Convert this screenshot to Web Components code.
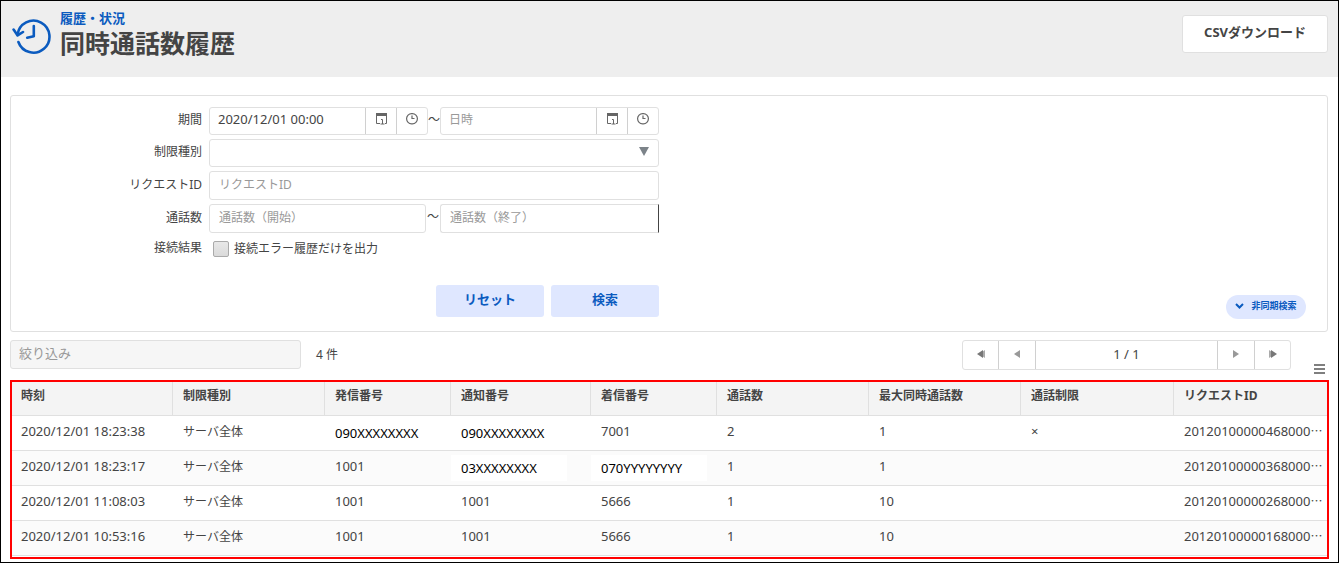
<!DOCTYPE html>
<html lang="ja">
<head>
<meta charset="utf-8">
<meta name="viewport" content="width=device-width, initial-scale=1">
<title>同時通話数履歴</title>
<style>
  :root {
    --text: #444;
    --muted: #999;
    --line: #e0e0e0;
    --line-dark: #d0d0d0;
    --blue: #0b5bbf;
    --blue-bg: #dfe7ff;
    --radius: 3px;
  }

  * {
    box-sizing: border-box;
  }

  body {
    margin: 0;
    min-height: 100vh;
    border: 1px solid #000;
    background: #fff;
    color: var(--text);
    font: 12px/18px "Noto Sans", "Noto Sans CJK JP", sans-serif;
  }

  main {
    padding: 18px 10px 3px 9px;
  }
</style>
</head>
<body>
<page-header category="履歴・状況" heading="同時通話数履歴">
  <csv-button>CSVダウンロード</csv-button>
</page-header>
<main>
  <search-panel></search-panel>
  <list-toolbar count="4" page="1" pages="1"></list-toolbar>
  <history-table></history-table>
</main>

<script>
const baseStyle = `
  *, :host { box-sizing: border-box; }
  button, input, select { font: inherit; color: inherit; margin: 0; }
  button { cursor: pointer; }
  svg { display: block; }
`;

class PageHeader extends HTMLElement {
  constructor() {
    super();
    this.attachShadow({ mode: 'open' });
  }

  connectedCallback() {
    this.shadowRoot.innerHTML = `
      <style>
        ${baseStyle}
        :host {
          display: block;
          background: #eee;
        }

        header {
          display: flex;
          align-items: flex-start;
          gap: 8px;
          min-height: 76px;
          padding: 8px 10px 0 11px;
        }

        .icon {
          margin-top: 8px;
        }

        .titles {
          flex: 1;
        }

        p {
          margin: 0;
          font-size: 13px;
          line-height: 18px;
          font-weight: bold;
          color: var(--blue);
        }

        h1 {
          margin: 0;
          font-size: 25px;
          line-height: 32px;
          font-weight: bold;
        }

        slot {
          display: block;
          padding-top: 6px;
        }
      </style>
      <header>
        <svg class="icon" width="40" height="38" viewBox="0 0 40 38" fill="none" stroke="#0b5bbf" stroke-width="2.6" stroke-linecap="round" stroke-linejoin="round" aria-hidden="true">
          <path d="M5.6 17.6A16 16 0 1 1 6.4 25"/>
          <path d="M1.6 12.6L5.6 18.4L11 15"/>
          <path d="M21.8 9V19.2L15.2 20.8"/>
        </svg>
        <div class="titles">
          <p>${this.getAttribute('category')}</p>
          <h1>${this.getAttribute('heading')}</h1>
        </div>
        <slot></slot>
      </header>
    `;
  }
}

class CsvButton extends HTMLElement {
  constructor() {
    super();
    this.attachShadow({ mode: 'open' });
    this.shadowRoot.innerHTML = `
      <style>
        ${baseStyle}
        :host {
          display: block;
        }

        button {
          display: block;
          height: 38px;
          padding: 0 21px 4px;
          border: 1px solid var(--line);
          border-radius: var(--radius);
          background: #fff;
          font-size: 13px;
          font-weight: bold;
        }
      </style>
      <button type="button"><slot></slot></button>
    `;
  }
}

// text box with calendar and clock buttons
class DateField extends HTMLElement {
  static formAssociated = true;

  constructor() {
    super();
    this.attachShadow({ mode: 'open', delegatesFocus: true });
  }

  connectedCallback() {
    this.shadowRoot.innerHTML = `
      <style>
        ${baseStyle}
        :host {
          display: flex;
          min-width: 0;
          height: 28px;
          border: 1px solid var(--line);
          border-radius: var(--radius);
          background: #fff;
        }

        input {
          flex: 1;
          min-width: 0;
          padding: 0 8px 4px;
          border: 0;
          background: none;
          font-size: 13px;
        }

        input::placeholder {
          color: var(--muted);
          font-size: 12px;
        }

        button {
          display: flex;
          justify-content: center;
          width: 31px;
          padding: 5px 0 0;
          border: 0;
          border-left: 1px solid var(--line-dark);
          background: none;
        }
      </style>
      <input type="text" aria-label="${this.getAttribute('label')}" value="${this.getAttribute('value') || ''}" placeholder="${this.getAttribute('placeholder') || ''}">
      <button type="button" aria-label="カレンダー">
        <svg width="11" height="12" viewBox="0 0 11 12" fill="none" stroke="#666">
          <path d="M.5 1V10.5H4M10.5 1V10.5H9"/>
          <path d="M0 1.5H11" stroke-width="3"/>
          <path d="M5 6.5H6.5V11M4.5 11H8.5"/>
        </svg>
      </button>
      <button type="button" aria-label="時計">
        <svg width="12" height="12" viewBox="0 0 12 12" fill="none" stroke="#666" stroke-width="1.2">
          <rect x=".6" y=".6" width="10.8" height="10.2" rx="5"/>
          <path d="M6 2.5V5.5H8.5"/>
        </svg>
      </button>
    `;
  }
}

class SearchPanel extends HTMLElement {
  constructor() {
    super();
    this.attachShadow({ mode: 'open' });
    this.shadowRoot.innerHTML = `
      <style>
        ${baseStyle}
        :host {
          display: block;
          border: 1px solid var(--line);
          border-radius: var(--radius);
        }

        form {
          padding: 11px 21px 12px 0;
        }

        .fields {
          display: grid;
          grid-template-columns: 191px 450px;
          column-gap: 7px;
          row-gap: 4px;
        }

        .name {
          align-self: center;
          padding-bottom: 2px;
          text-align: right;
        }

        .range {
          display: grid;
          grid-template-columns: 219px 12px 219px;
          align-items: center;
        }

        .range.calls {
          grid-template-columns: 217px 14px 219px;
        }

        .range span {
          padding-bottom: 3px;
          text-align: center;
        }

        input[type="text"], select {
          width: 100%;
          height: 29px;
          padding: 0 9px 3px;
          border: 1px solid var(--line);
          border-radius: var(--radius);
          background: #fff;
        }

        input::placeholder {
          color: var(--muted);
        }

        #calls-to {
          border-right-color: #444;
          border-top-right-radius: 0;
          border-bottom-right-radius: 0;
        }

        .select {
          display: grid;
          align-items: center;
        }

        .select > * {
          grid-area: 1 / 1;
        }

        .select svg {
          justify-self: end;
          margin: 0 10px 3px 0;
          pointer-events: none;
        }

        select {
          appearance: none;
          height: 28px;
        }

        .check {
          display: flex;
          align-items: center;
          gap: 5px;
          height: 24px;
          padding-left: 4px;
        }

        input[type="checkbox"] {
          appearance: none;
          width: 16px;
          height: 16px;
          border: 1px solid #aaa;
          border-radius: 2px;
          background: linear-gradient(#e8e8e8, #dadada);
        }

        .actions {
          display: flex;
          gap: 7px;
          height: 34px;
          margin-top: 24px;
          padding-left: 425px;
        }

        .actions button {
          width: 108px;
          height: 32px;
          padding: 0 0 5px;
          border: 0;
          border-radius: var(--radius);
          background: var(--blue-bg);
          color: var(--blue);
          font-size: 13px;
          font-weight: bold;
        }

        .actions .pill {
          display: flex;
          align-items: center;
          justify-content: center;
          align-self: flex-end;
          gap: 7px;
          width: 80px;
          height: 24px;
          margin-left: auto;
          padding: 0 0 2px;
          border-radius: 12px;
          font-size: 9px;
        }
      </style>
      <form>
        <div class="fields">
          <label class="name" for="from">期間</label>
          <div class="range">
            <date-field id="from" label="期間（開始）" value="2020/12/01 00:00"></date-field>
            <span>～</span>
            <date-field label="期間（終了）" placeholder="日時"></date-field>
          </div>

          <label class="name" for="kind">制限種別</label>
          <div class="select">
            <select id="kind"><option></option></select>
            <svg width="10" height="9" viewBox="0 0 10 9" aria-hidden="true"><path d="M0 0H10L5 9Z" fill="#7c8389"/></svg>
          </div>

          <label class="name" for="request">リクエストID</label>
          <input type="text" id="request" placeholder="リクエストID">

          <label class="name" for="calls-from">通話数</label>
          <div class="range calls">
            <input type="text" id="calls-from" placeholder="通話数（開始）">
            <span>～</span>
            <input type="text" id="calls-to" aria-label="通話数（終了）" placeholder="通話数（終了）">
          </div>

          <span class="name">接続結果</span>
          <div class="check">
            <input type="checkbox" id="errors">
            <label for="errors">接続エラー履歴だけを出力</label>
          </div>
        </div>
        <div class="actions">
          <button type="reset">リセット</button>
          <button type="button">検索</button>
          <button type="button" class="pill">
            <svg width="9" height="6" viewBox="0 0 9 6" fill="none" stroke="#0b5bbf" stroke-width="2" aria-hidden="true"><path d="M1 1L4.5 4.5L8 1"/></svg>
            非同期検索
          </button>
        </div>
      </form>
    `;
  }
}

class ListToolbar extends HTMLElement {
  constructor() {
    super();
    this.attachShadow({ mode: 'open' });
  }

  connectedCallback() {
    this.shadowRoot.innerHTML = `
      <style>
        ${baseStyle}
        :host {
          display: flex;
          align-items: flex-start;
          height: 48px;
          padding: 8px 3px 0 0;
        }

        input {
          width: 291px;
          height: 29px;
          padding: 0 8px 3px;
          border: 1px solid var(--line);
          border-radius: var(--radius);
          background: #f6f6f6;
          font-size: 13px;
        }

        input::placeholder {
          color: var(--muted);
        }

        .count {
          flex: 1;
          padding: 6px 0 0 15px;
        }

        .pager {
          display: grid;
          grid-template-columns: 35px 37px 182px 37px 36px;
          height: 30px;
          border: 1px solid var(--line);
          border-radius: var(--radius);
        }

        .pager > * {
          display: flex;
          justify-content: center;
          align-items: center;
          padding: 0 0 2px;
          border: 0;
          background: none;
          font-size: 13px;
        }

        .pager > * + * {
          border-left: 1px solid var(--line-dark);
        }

        .menu {
          align-self: flex-end;
          margin: 0 0 6px 23px;
          padding: 0;
          border: 0;
          background: none;
        }
      </style>
      <input type="text" aria-label="絞り込み" placeholder="絞り込み">
      <div class="count">${this.getAttribute('count')} 件</div>
      <div class="pager">
        <button type="button" aria-label="最初のページ"><svg width="8" height="8" viewBox="0 0 8 8"><path d="M8 0V8L2 4Z" fill="#aaa"/><path d="M6 0V8L0 4Z" fill="#777"/></svg></button>
        <button type="button" aria-label="前のページ"><svg width="6" height="8" viewBox="0 0 6 8"><path d="M6 0V8L0 4Z" fill="#999"/></svg></button>
        <div class="page">${this.getAttribute('page')} / ${this.getAttribute('pages')}</div>
        <button type="button" aria-label="次のページ"><svg width="6" height="8" viewBox="0 0 6 8"><path d="M0 0V8L6 4Z" fill="#999"/></svg></button>
        <button type="button" aria-label="最後のページ"><svg width="8" height="8" viewBox="0 0 8 8"><path d="M0 0V8L6 4Z" fill="#aaa"/><path d="M2 0V8L8 4Z" fill="#777"/></svg></button>
      </div>
      <button type="button" class="menu" aria-label="メニュー"><svg width="11" height="10" viewBox="0 0 11 10"><path d="M0 1H11M0 5H11M0 9H11" stroke="#555" stroke-width="1.6"/></svg></button>
    `;
  }
}

const columns = [
  ['時刻', 160],
  ['制限種別', 152],
  ['発信番号', 126],
  ['通知番号', 140],
  ['着信番号', 126],
  ['通話数', 152],
  ['最大同時通話数', 152],
  ['通話制限', 153],
  ['リクエストID', 154],
];

const calls = [
  ['2020/12/01 18:23:38', 'サーバ全体', '090XXXXXXXX', '090XXXXXXXX', '7001', '2', '1', '×', '20120100000468000'],
  ['2020/12/01 18:23:17', 'サーバ全体', '1001', '03XXXXXXXX', '070YYYYYYYY', '1', '1', '', '20120100000368000'],
  ['2020/12/01 11:08:03', 'サーバ全体', '1001', '1001', '5666', '1', '10', '', '20120100000268000'],
  ['2020/12/01 10:53:16', 'サーバ全体', '1001', '1001', '5666', '1', '10', '', '20120100000168000'],
];

class HistoryTable extends HTMLElement {
  constructor() {
    super();
    this.attachShadow({ mode: 'open' });
  }

  cell(value, index) {
    if (/[XY]/.test(value)) {
      return `<td class="masked"><span>${value}</span></td>`;
    }
    if (index === 1) {
      return `<td class="kind">${value}</td>`;
    }
    if (index === 8) {
      return `<td>${value}<span class="more">⋯</span></td>`;
    }
    return `<td>${value}</td>`;
  }

  connectedCallback() {
    this.shadowRoot.innerHTML = `
      <style>
        ${baseStyle}
        :host {
          display: block;
          margin-right: -1px;
          padding-bottom: 1px;
          border: 2px solid #f00;
        }

        table {
          width: 100%;
          table-layout: fixed;
          border-collapse: separate;
          border-spacing: 0;
        }

        th, td {
          padding-left: 10px;
          padding-right: 0;
          border-bottom: 1px solid var(--line);
        }

        th {
          height: 34px;
          padding-top: 0;
          padding-bottom: 6px;
          background: #f4f4f4;
          text-align: left;
          font-weight: bold;
        }

        th + th {
          border-left: 1px solid var(--line);
        }

        td {
          height: 35px;
          padding-top: 0;
          padding-bottom: 5px;
          font-size: 13px;
          white-space: nowrap;
        }

        td + td {
          padding-left: 11px;
        }

        th:first-child, td:first-child {
          padding-left: 9px;
        }

        tr:nth-child(even) td {
          background: #fbfbfb;
        }

        td.kind {
          padding-bottom: 3px;
          font-size: 12px;
        }

        td.masked {
          padding: 0 0 0 1px;
          color: #000;
        }

        .masked span {
          display: block;
          width: 116px;
          padding: 4px 0 4px 10px;
          background: #fff;
        }

        .more {
          font: 12px/18px "Noto Sans CJK JP", sans-serif;
        }
      </style>
      <table>
        <colgroup>${columns.map(([, width]) => `<col style="width: ${width}px">`).join('')}</colgroup>
        <thead>
          <tr>${columns.map(([name]) => `<th scope="col">${name}</th>`).join('')}</tr>
        </thead>
        <tbody>
          ${calls.map((row) => `<tr>${row.map((value, i) => this.cell(value, i)).join('')}</tr>`).join('')}
        </tbody>
      </table>
    `;
  }
}

customElements.define('page-header', PageHeader);
customElements.define('csv-button', CsvButton);
customElements.define('date-field', DateField);
customElements.define('search-panel', SearchPanel);
customElements.define('list-toolbar', ListToolbar);
customElements.define('history-table', HistoryTable);
</script>
</body>
</html>
